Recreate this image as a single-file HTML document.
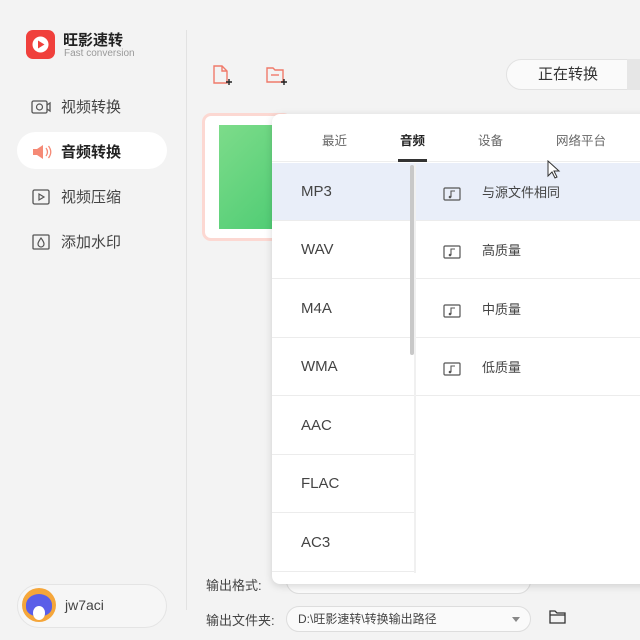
<!DOCTYPE html>
<html><head><meta charset="utf-8"><style>
*{margin:0;padding:0;box-sizing:border-box}
body{width:640px;height:640px;overflow:hidden;background:#f3f3f3;font-family:"Liberation Sans","Noto Sans CJK SC",sans-serif;position:relative;color:#333}
.a{position:absolute}
.nav{left:30px;font-size:15px;color:#444;display:flex;align-items:center;gap:9px}
.row{position:absolute;left:0;height:58px;display:flex;align-items:center;font-size:15px;color:#444;border-bottom:1px solid #ececec;font-weight:normal}
</style></head><body>
<!-- logo -->
<div class="a" style="left:26px;top:30px;width:29px;height:29px;border-radius:7px;background:#f0403c"></div>
<svg class="a" style="left:29px;top:33px" width="23" height="23" viewBox="0 0 23 23"><circle cx="11.5" cy="11.5" r="8" fill="#fff"/><path d="M9 7.5 L15.5 11.5 L9 15.5Z" fill="#f0403c"/></svg>
<div class="a" style="left:63px;top:29px;font-size:15px;font-weight:bold;color:#222">旺影速转</div>
<div class="a" style="left:64px;top:48px;font-size:10px;color:#999">Fast conversion</div>
<div class="a" style="left:186px;top:30px;width:1px;height:580px;background:#e2e2e2"></div>
<!-- nav -->
<div class="a nav" style="top:96px"><svg width="22" height="20"><rect x="2" y="4" width="15" height="12" rx="1.5" fill="none" stroke="#555" stroke-width="1.3"/><path d="M17 8l3-2v8l-3-2" fill="none" stroke="#555" stroke-width="1.3"/><circle cx="9.5" cy="10" r="3" fill="none" stroke="#555" stroke-width="1.2"/></svg>视频转换</div>
<div class="a" style="left:17px;top:132px;width:150px;height:37px;border-radius:19px;background:#fff"></div>
<div class="a nav" style="top:141px;font-weight:bold;color:#222"><svg width="22" height="20"><path d="M3 7h4l6-4v14l-6-4H3z" fill="#f58a76"/><path d="M16 6q3 4 0 8M18.5 4q4.5 6 0 12" fill="none" stroke="#f58a76" stroke-width="1.3"/></svg>音频转换</div>
<div class="a nav" style="top:186px"><svg width="22" height="20"><rect x="3" y="3" width="16" height="14" rx="1.5" fill="none" stroke="#555" stroke-width="1.3"/><path d="M9 7l5 3-5 3z" fill="none" stroke="#555" stroke-width="1.2"/></svg>视频压缩</div>
<div class="a nav" style="top:231px"><svg width="22" height="20"><rect x="3" y="3" width="16" height="14" rx="1" fill="none" stroke="#555" stroke-width="1.3"/><path d="M11 6q-3 4-3 6a3 3 0 0 0 6 0q0-2-3-6z" fill="none" stroke="#555" stroke-width="1.2"/></svg>添加水印</div>
<!-- user -->
<div class="a" style="left:17px;top:584px;width:150px;height:44px;border-radius:22px;border:1px solid #e4e4e4;background:#f6f6f6"></div>
<div class="a" style="left:22px;top:588px;width:34px;height:34px;border-radius:50%;background:#f5a63a;overflow:hidden"><div style="position:absolute;left:4px;top:6px;width:26px;height:22px;border-radius:50% 50% 40% 40%;background:#5a5ee8"></div><div style="position:absolute;left:11px;top:18px;width:12px;height:14px;border-radius:50%;background:#fff"></div></div>
<div class="a" style="left:65px;top:597px;font-size:14px;color:#444">jw7aci</div>
<!-- top icons -->
<svg class="a" style="left:212px;top:64px" width="24" height="24"><path d="M2 2h8l5 5v12H2z" fill="none" stroke="#f07a6a" stroke-width="1.4"/><path d="M10 2v5h5" fill="none" stroke="#f07a6a" stroke-width="1.4"/><path d="M17 15v6M14 18h6" stroke="#222" stroke-width="1.4"/></svg>
<svg class="a" style="left:265px;top:64px" width="26" height="24"><path d="M2 4h6l2 2h8v12H2z" fill="none" stroke="#f07a6a" stroke-width="1.4"/><path d="M6 11h8" stroke="#f07a6a" stroke-width="1.4"/><path d="M19 15v6M16 18h6" stroke="#222" stroke-width="1.4"/></svg>
<div class="a" style="left:506px;top:59px;width:124px;height:31px;border-radius:16px 0 0 16px;background:#fafafa;border:1px solid #e2e2e2;font-size:15px;text-align:center;line-height:29px;color:#333">正在转换</div>
<div class="a" style="left:627px;top:59px;width:13px;height:31px;background:#e6e6e6"></div>
<!-- thumbnail -->
<div class="a" style="left:202px;top:113px;width:90px;height:128px;border:3px solid #fcd8d2;border-radius:9px;background:#fff"></div>
<div class="a" style="left:219px;top:125px;width:60px;height:104px;background:linear-gradient(135deg,#7ddc8a,#4fcc74)"></div>
<!-- bottom -->
<div class="a" style="left:206px;top:575px;font-size:13px;color:#444">输出格式:</div>
<div class="a" style="left:286px;top:568px;width:245px;height:26px;border:1px solid #ddd;border-radius:13px;background:#fafafa"></div>
<div class="a" style="left:206px;top:610px;font-size:13px;color:#444">输出文件夹:</div>
<div class="a" style="left:286px;top:606px;width:245px;height:26px;border:1px solid #ddd;border-radius:13px;background:#fafafa;font-size:12px;line-height:24px;padding-left:11px;color:#444">D:\旺影速转\转换输出路径</div>
<div class="a" style="left:512px;top:617px;border:4px solid transparent;border-top:5px solid #888"></div>
<svg class="a" style="left:549px;top:609px" width="18" height="16"><path d="M1 2h5l2 2h8v10H1z M1 6h15" fill="none" stroke="#333" stroke-width="1.3"/></svg>
<!-- popup -->
<div class="a" style="left:272px;top:114px;width:380px;height:470px;background:#fff;border-radius:8px 0 0 8px;box-shadow:0 2px 8px rgba(0,0,0,.15);overflow:hidden">
 <div class="a" style="left:0;top:0;width:380px;height:48px;border-bottom:1px solid #eee;font-size:12.5px;color:#666">
  <span class="a" style="left:50px;top:16px">最近</span>
  <span class="a" style="left:128px;top:16px;color:#222;font-weight:bold">音频</span>
  <span class="a" style="left:206px;top:16px">设备</span>
  <span class="a" style="left:284px;top:16px">网络平台</span>
  <div class="a" style="left:126px;top:45px;width:29px;height:3px;background:#333"></div>
 </div>
 <div class="a" style="left:0;top:49px;width:142px;height:421px">
  <div class="row" style="top:0;width:142px;background:#e9eef9;padding-left:29px">MP3</div>
  <div class="row" style="top:58px;width:142px;padding-left:29px">WAV</div>
  <div class="row" style="top:117px;width:142px;padding-left:29px">M4A</div>
  <div class="row" style="top:175px;width:142px;padding-left:29px">WMA</div>
  <div class="row" style="top:234px;width:142px;padding-left:29px">AAC</div>
  <div class="row" style="top:292px;width:142px;padding-left:29px">FLAC</div>
  <div class="row" style="top:351px;width:142px;padding-left:29px">AC3</div>
 </div>
 <div class="a" style="left:138px;top:51px;width:4px;height:190px;background:#c8c8c8;border-radius:2px"></div>
 <div class="a" style="left:142px;top:49px;width:2px;height:410px;background:#f0f0f0"></div>
 <div class="a" style="left:144px;top:49px;width:236px">
  <div class="row" style="top:0;width:236px;background:#e9eef9;padding-left:66px;font-size:13px">与源文件相同</div>
  <div class="row" style="top:58px;width:236px;padding-left:66px;font-size:13px">高质量</div>
  <div class="row" style="top:117px;width:236px;padding-left:66px;font-size:13px">中质量</div>
  <div class="row" style="top:175px;width:236px;padding-left:66px;font-size:13px">低质量</div>
 </div>
</div>
<svg class="a" style="left:443px;top:186px" width="18" height="16"><rect x="1" y="2" width="16" height="12" rx="1" fill="none" stroke="#555" stroke-width="1.2"/><path d="M8 11V5h4" fill="none" stroke="#555" stroke-width="1.1"/><circle cx="7" cy="11" r="1.3" fill="#555"/></svg>
<svg class="a" style="left:443px;top:244px" width="18" height="16"><rect x="1" y="2" width="16" height="12" rx="1" fill="none" stroke="#555" stroke-width="1.2"/><path d="M8 11V5h4" fill="none" stroke="#555" stroke-width="1.1"/><circle cx="7" cy="11" r="1.3" fill="#555"/></svg>
<svg class="a" style="left:443px;top:303px" width="18" height="16"><rect x="1" y="2" width="16" height="12" rx="1" fill="none" stroke="#555" stroke-width="1.2"/><path d="M8 11V5h4" fill="none" stroke="#555" stroke-width="1.1"/><circle cx="7" cy="11" r="1.3" fill="#555"/></svg>
<svg class="a" style="left:443px;top:361px" width="18" height="16"><rect x="1" y="2" width="16" height="12" rx="1" fill="none" stroke="#555" stroke-width="1.2"/><path d="M8 11V5h4" fill="none" stroke="#555" stroke-width="1.1"/><circle cx="7" cy="11" r="1.3" fill="#555"/></svg>
<svg class="a" style="left:547px;top:160px" width="14" height="20"><path d="M1 1v15l4-4 3 6 2-1-3-6h5z" fill="#fff" stroke="#333" stroke-width="1"/></svg>
</body></html>
